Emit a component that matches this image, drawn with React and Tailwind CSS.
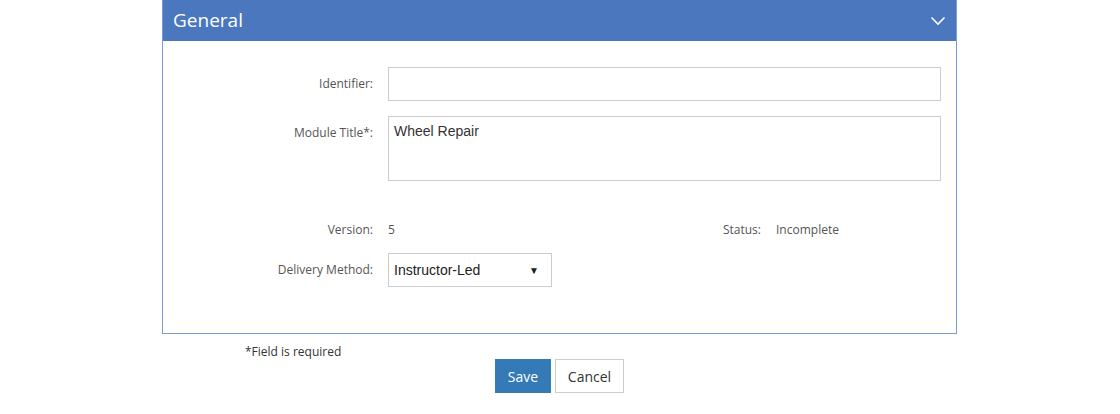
export default function App() {
  const label = "w-[225px] shrink-0 pr-[15px] text-right text-[12px] text-[#555]";
  return (
    <div className="w-[1120px] h-[414px] bg-white" style={{ fontFamily: '"Open Sans", sans-serif' }}>
      <div className="ml-[162px] w-[795px] border border-t-0 border-[#7b9bd5]">
        <div className="flex h-[41px] items-center justify-between bg-[#4a77be] pl-[10px] pr-[10px]">
          <span className="text-[19px] text-white">General</span>
          <svg width="16" height="10" viewBox="0 0 16 10" fill="none" stroke="white" strokeWidth="1.6">
            <path d="M1.5 1.5 L8 8 L14.5 1.5" />
          </svg>
        </div>
        <div className="pt-[26px] pb-[46px] pr-[15px]">
          <div className="flex items-center">
            <div className={label}>Identifier:</div>
            <input className="h-[34px] flex-1 border border-[#ccc] px-[6px] text-[14px] outline-none" style={{ fontFamily: '"Liberation Sans", Arial, sans-serif' }} />
          </div>
          <div className="mt-[15px] flex items-start">
            <div className={label + " pt-[8px]"}>Module Title*:</div>
            <div className="h-[65px] flex-1 border border-[#ccc] px-[5px] pt-[4px] text-[14px] text-[#333]" style={{ fontFamily: '"Liberation Sans", Arial, sans-serif' }}>
              Wheel Repair
            </div>
          </div>
          <div className="mt-[40px] flex items-center text-[12px] text-[#555]">
            <div className={label}>Version:</div>
            <div className="w-[333px]">5</div>
            <div className="w-[55px] text-right pr-[15px]">Status:</div>
            <div>Incomplete</div>
          </div>
          <div className="mt-[14px] flex items-center">
            <div className={label}>Delivery Method:</div>
            <div className="flex h-[34px] w-[164px] items-center justify-between border border-[#ccc] pl-[5px] pr-[12px] text-[14px] text-[#222]" style={{ fontFamily: '"Liberation Sans", Arial, sans-serif' }}>
              <span>Instructor-Led</span>
              <span className="text-[10px]">▼</span>
            </div>
          </div>
        </div>
      </div>
      <div className="ml-[162px] w-[795px]">
        <div className="pl-[83px] pt-[9px] text-[12px] leading-[17px] text-[#333]">*Field is required</div>
        <div className="-mt-[1px] flex justify-center gap-[4px]">
          <button className="h-[34px] w-[56px] bg-[#337ab7] text-[14px] text-white">Save</button>
          <button className="h-[34px] w-[69px] border border-[#ccc] bg-white text-[14px] text-[#333]">Cancel</button>
        </div>
      </div>
    </div>
  );
}
